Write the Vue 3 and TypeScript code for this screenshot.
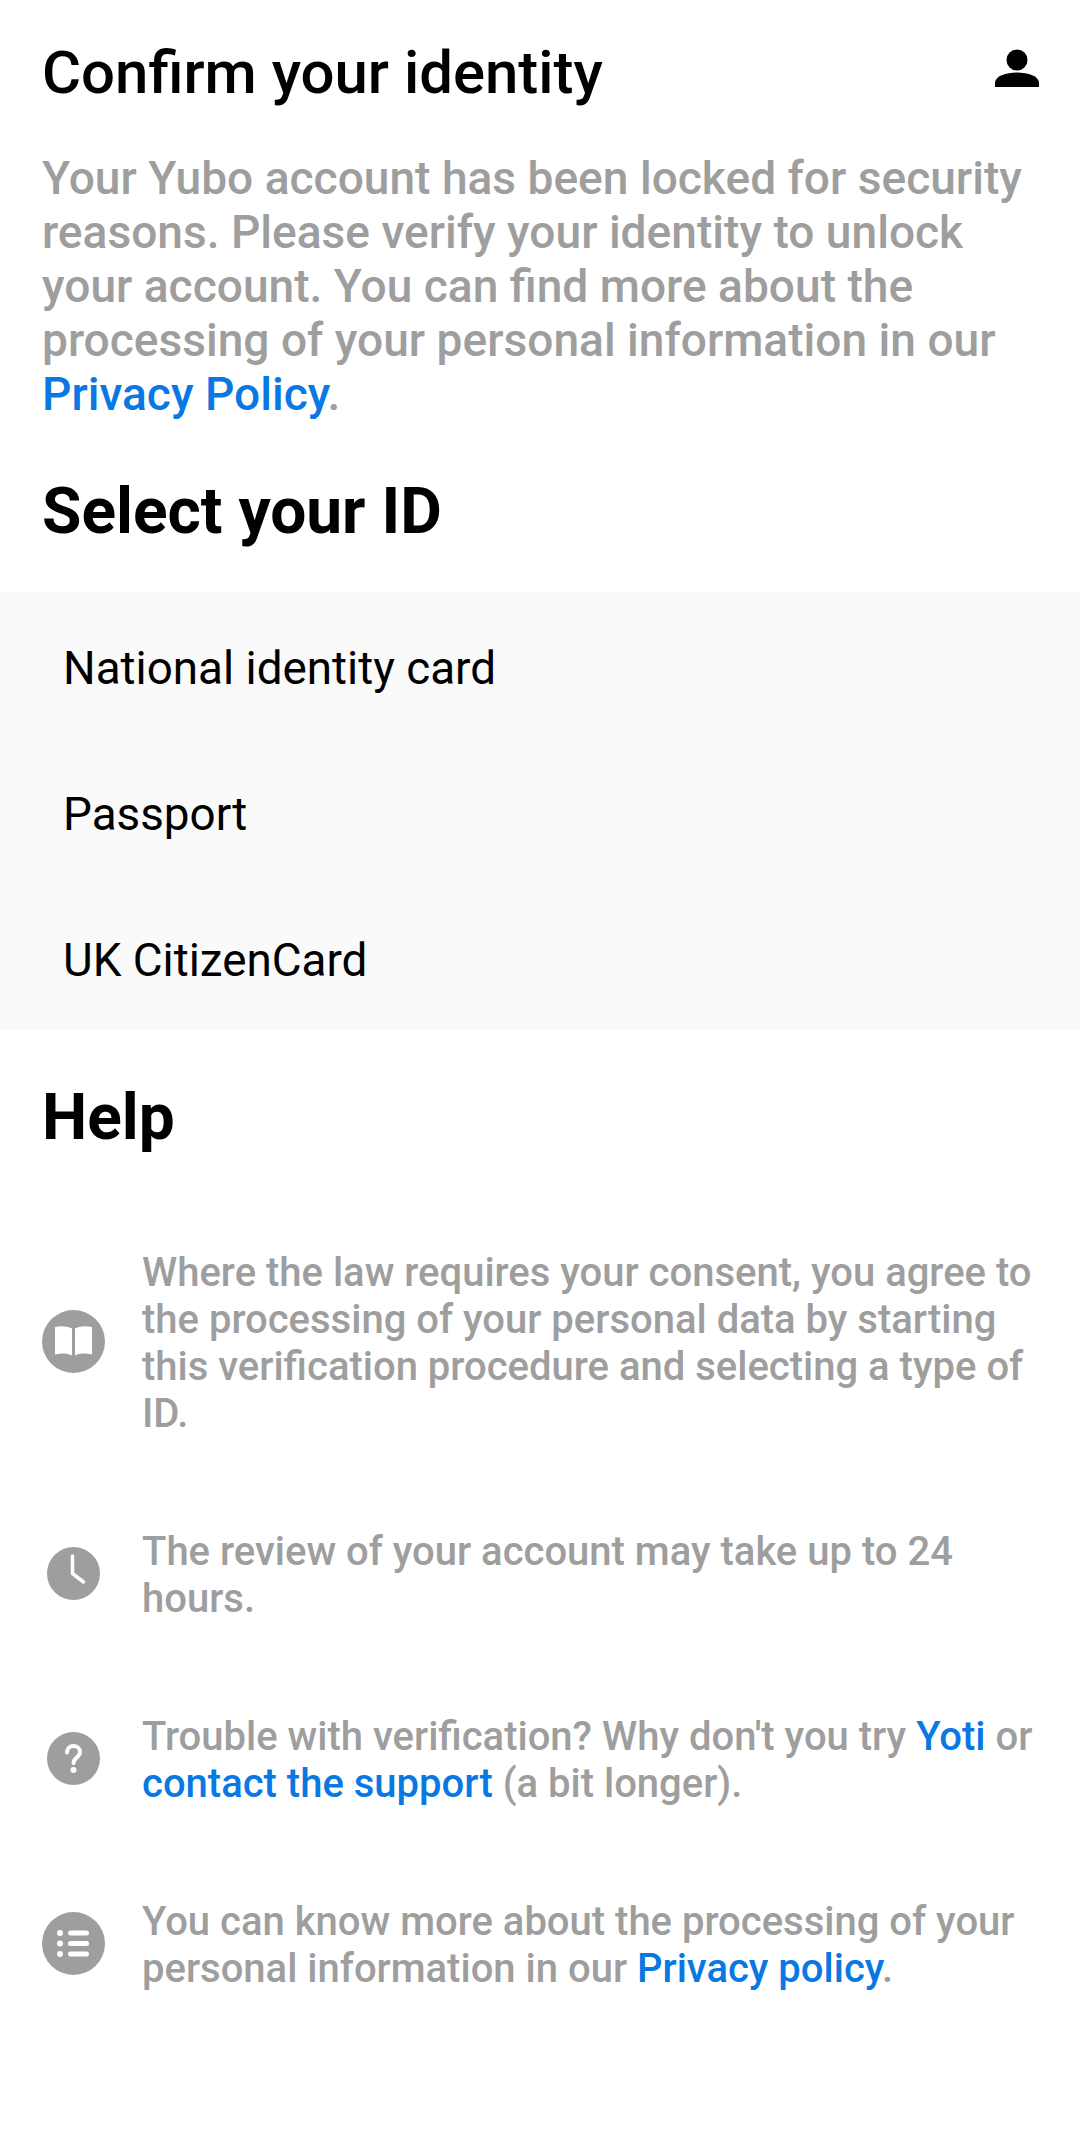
<script setup lang="ts">
interface IdOption {
  id: string
  label: string
}

const idOptions: IdOption[] = [
  { id: 'national', label: 'National identity card' },
  { id: 'passport', label: 'Passport' },
  { id: 'citizen', label: 'UK CitizenCard' },
]
</script>

<template>
  <main class="verify-page">
    <header class="verify-header">
      <h1>Confirm your identity</h1>
      <svg class="profile-icon" viewBox="0 0 44 38" aria-hidden="true">
        <circle cx="22" cy="11" r="10.500" fill="#000" />
        <path d="M0 38v-4c0-7 11-10.500 22-10.500S44 27 44 34v4z" fill="#000" />
      </svg>
    </header>

    <p class="intro">
      Your Yubo account has been locked for security reasons. Please verify your identity to unlock your account. You can find more about the processing of your personal information in our
      <a>Privacy Policy</a>.
    </p>

    <h2 class="section-title select-title">Select your ID</h2>

    <ul class="id-list">
      <li v-for="option in idOptions" :key="option.id">{{ option.label }}</li>
    </ul>

    <h2 class="section-title help-title">Help</h2>

    <section class="help-list">
      <div class="help-row">
        <div class="help-icon">
          <svg width="63" height="63" viewBox="0 0 63 63" aria-hidden="true">
            <circle cx="31.500" cy="31.500" r="31.500" fill="#9e9e9e" />
            <path d="M13 17c6-1.500 12-1 17 1.500v27c-5-2.500-11-2.500-17-1z" fill="#fff" />
            <path d="M50 17c-6-1.500-12-1-17 1.500v27c5-2.500 11-2.500 17-1z" fill="#fff" />
          </svg>
        </div>
        <p>Where the law requires your consent, you agree to the processing of your personal data by starting this verification procedure and selecting a type of ID.</p>
      </div>

      <div class="help-row">
        <div class="help-icon">
          <svg width="53" height="53" viewBox="0 0 53 53" aria-hidden="true">
            <circle cx="26.500" cy="26.500" r="26.500" fill="#9e9e9e" />
            <path d="M25.500 9v17.500L36.500 35" fill="none" stroke="#fff" stroke-width="3.500" stroke-linecap="round" stroke-linejoin="round" />
          </svg>
        </div>
        <p>The review of your account may take up to 24 hours.</p>
      </div>

      <div class="help-row">
        <div class="help-icon">
          <svg width="53" height="53" viewBox="0 0 53 53" aria-hidden="true">
            <circle cx="26.500" cy="26.500" r="26.500" fill="#9e9e9e" />
            <path d="M20 20.500c0-4 3-6.500 6.500-6.500s6.500 2.500 6.500 6c0 5.500-6.500 5.500-6.500 11" fill="none" stroke="#fff" stroke-width="4" stroke-linecap="round" />
            <circle cx="26.500" cy="38" r="3" fill="#fff" />
          </svg>
        </div>
        <p>Trouble with verification? Why don't you try <a>Yoti</a> or <a>contact the support</a> (a bit longer).</p>
      </div>

      <div class="help-row">
        <div class="help-icon">
          <svg width="63" height="63" viewBox="0 0 63 63" aria-hidden="true">
            <circle cx="31.500" cy="31.500" r="31.500" fill="#9e9e9e" />
            <g fill="#fff">
              <circle cx="18" cy="21" r="3" />
              <circle cx="18" cy="31.500" r="3" />
              <circle cx="18" cy="42" r="3" />
              <rect x="26" y="18.500" width="21" height="5" rx="2.500" />
              <rect x="26" y="29" width="21" height="5" rx="2.500" />
              <rect x="26" y="39.500" width="21" height="5" rx="2.500" />
            </g>
          </svg>
        </div>
        <p>You can know more about the processing of your personal information in our <a>Privacy policy</a>.</p>
      </div>
    </section>
  </main>
</template>

<style>
html,
body {
  margin: 0;
  background: #fff;
}
</style>

<style scoped>
.verify-page {
  width: 1080px;
  height: 2140px;
  overflow: hidden;
  background: #fff;
  color: #000;
  font-family: Roboto, "Liberation Sans", sans-serif;
}

.verify-header {
  display: flex;
  align-items: center;
  justify-content: space-between;
  padding: 37px 42px 0 42px;
}

.verify-header h1 {
  margin: 0;
  font-size: 59.9px;
  line-height: 72px;
  font-weight: 500;
}

.profile-icon {
  width: 44px;
  height: 38px;
  margin-top: -10px;
  margin-right: -1px;
}

.intro {
  margin: 42px 42px 0;
  font-size: 46.1px;
  line-height: 54px;
  font-weight: 500;
  color: #9e9e9e;
}

.intro a,
.help-row a {
  color: #0a78e2;
}

.section-title {
  margin: 0 42px;
  font-size: 64px;
  line-height: 76px;
  font-weight: 700;
}

.select-title {
  margin-top: 53px;
}

.id-list {
  list-style: none;
  margin: 42px 0 0;
  padding: 3px 63px 0;
  height: 438px;
  box-sizing: border-box;
  background: #fafafa;
}

.id-list li {
  height: 146px;
  display: flex;
  align-items: center;
  font-size: 45.8px;
}

.help-title {
  margin-top: 50px;
}

.help-list {
  margin-top: 93px;
  padding: 0 42px;
}

.help-row {
  display: grid;
  grid-template-columns: 63px minmax(0, 1fr);
  column-gap: 37px;
  align-items: center;
  margin-bottom: 91px;
}

.help-icon {
  display: flex;
  justify-content: center;
  margin-top: -3px;
}

.help-row p {
  margin: 0;
  font-size: 40px;
  line-height: 47px;
  font-weight: 500;
  color: #9e9e9e;
}

.help-row svg {
  display: block;
}
</style>
